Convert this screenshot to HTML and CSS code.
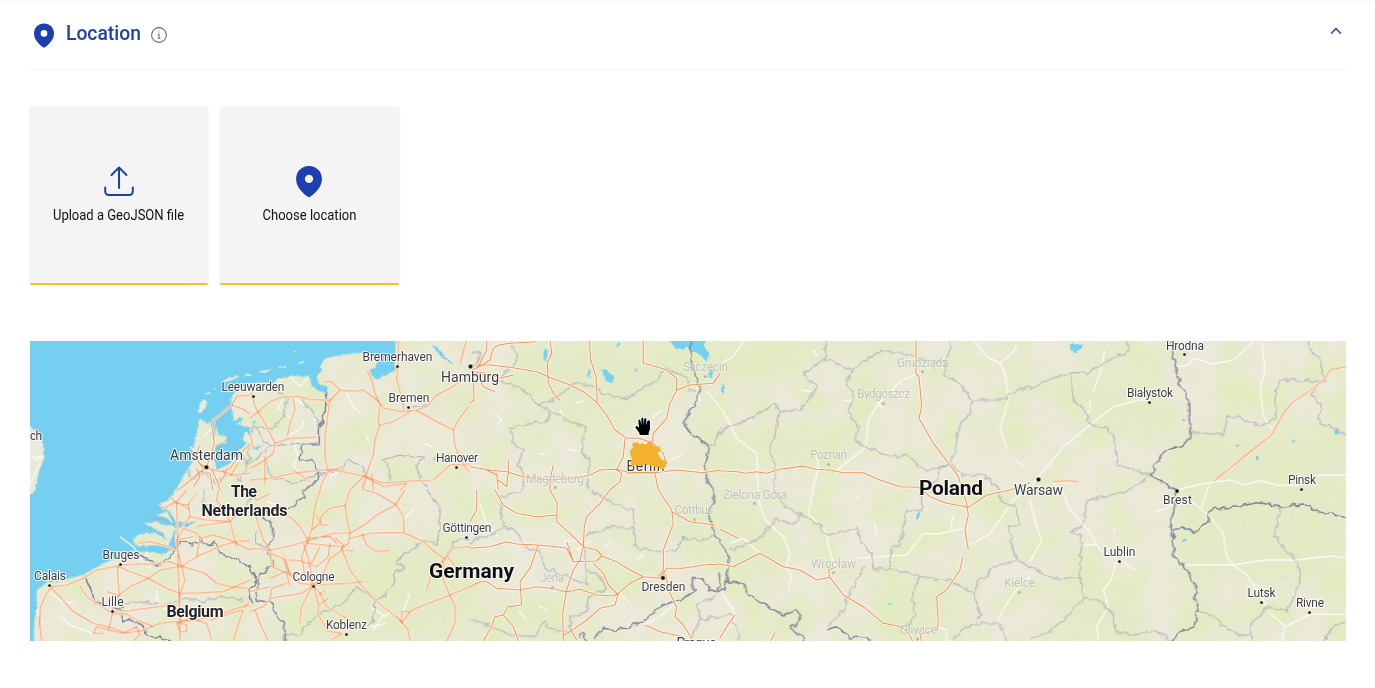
FILE: index.html
```html
<!DOCTYPE html>
<html lang="en">
<head>
<meta charset="utf-8">
<title>Location</title>
<link rel="stylesheet" href="styles.css">
</head>
<body>
<main class="panel">
  <header class="panel-header">
    <svg class="pin" viewBox="0 0 20 24"><path fill-rule="evenodd" d="M10 0C4.200 0 0 4.300 0 10c0 5.400 4 10 8.600 13.500a2.300 2.300 0 0 0 2.800 0C16 20 20 15.400 20 10 20 4.300 15.800 0 10 0zm0 6.600a3.300 3.300 0 1 1 0 6.600 3.300 3.300 0 0 1 0-6.600z"/></svg>
    <h2 class="title">Location</h2>
    <svg class="info" viewBox="0 0 16 16"><circle cx="8" cy="8" r="7.400"/><path d="M6.800 7.200H8v4M6.700 11.300h2.700M8 4.400v1.100"/></svg>
    <svg class="chevron" viewBox="0 0 12 8"><path d="M1.300 6.500 6 1.500l4.700 5"/></svg>
  </header>

  <div class="cards">
    <button class="card card-upload">
      <svg class="upload" viewBox="0 0 30 31"><path d="M15 22V1.500M7.500 9 15 1.500 22.500 9M1.200 21.500v4a3.500 3.500 0 0 0 3.500 3.500h20.600a3.500 3.500 0 0 0 3.500-3.500v-4"/></svg>
      <span class="card-label">Upload a GeoJSON file</span>
    </button>
    <button class="card">
      <svg class="pin pin-large" viewBox="0 0 20 24"><path fill-rule="evenodd" d="M10 0C4.200 0 0 4.300 0 10c0 5.400 4 10 8.600 13.500a2.300 2.300 0 0 0 2.800 0C16 20 20 15.400 20 10 20 4.300 15.800 0 10 0zm0 6.800a3.200 3.200 0 1 1 0 6.400 3.200 3.200 0 0 1 0-6.400z"/></svg>
      <span class="card-label">Choose location</span>
    </button>
  </div>

  <svg class="map" viewBox="0 3 3948 900">
    <defs>
      <filter id="forest" x="0" y="0" width="100%" height="100%" color-interpolation-filters="sRGB">
        <feTurbulence type="fractalNoise" baseFrequency="0.009" numOctaves="4" seed="8"/>
        <feColorMatrix values="0 0 0 0 .885  0 0 0 0 .922  0 0 0 0 .755  3 0 0 0 -1.250"/>
      </filter>
      <filter id="wiggle" filterUnits="userSpaceOnUse" x="0" y="0" width="3948" height="910" color-interpolation-filters="sRGB">
        <feTurbulence type="fractalNoise" baseFrequency="0.055" numOctaves="1" seed="4"/>
        <feDisplacementMap in="SourceGraphic" scale="22" xChannelSelector="R" yChannelSelector="G"/>
      </filter>
      <filter id="ragged" filterUnits="userSpaceOnUse" x="0" y="0" width="3948" height="910" color-interpolation-filters="sRGB">
        <feTurbulence type="fractalNoise" baseFrequency="0.090" numOctaves="2" seed="4"/>
        <feDisplacementMap in="SourceGraphic" scale="9" xChannelSelector="R" yChannelSelector="G"/>
      </filter>
      <filter id="soft"><feGaussianBlur stdDeviation="20"/></filter>

      <g id="roads">
        <g>
          <path d="M660 165 620 170 605 195 552 240 548 268 553 310 540 350 530 380M605 195 635 205 660 222M530 382 508 370 497 350 508 318M530 382 505 400 470 430 440 452M500 385 510 410 490 440M497 350 515 380 545 388 575 395 600 385 625 350 660 310M545 388 560 420 570 450M575 395 610 405 660 400M508 395 540 400 548 450M590 392 570 430M600 410 625 370"/>
        </g>
        <g transform="translate(0 450)">
          <path d="M35 453 30 400 32 350 50 310 65 290 110 285 160 265 200 240 260 228 310 222 360 222 420 215 455 228 500 200 580 165 620 155 660 150M60 290 90 320 130 365 190 400 250 415 290 430 340 420 390 400 440 395 500 390 560 375 620 355 660 345"/>
          <path d="M260 228 300 245 355 265 410 295 450 310 500 310 580 305 660 270M262 228 265 280 268 315 300 290 355 265 390 240 455 228M268 315 250 345 248 365 300 362 400 348 440 345M148 285 170 320 215 350 248 370 290 372 320 390 370 410M230 305 270 318M455 228 465 270 450 310 448 350 455 400 470 405 470 425 450 425 440 400 455 400M455 228 525 250 560 280 600 290 655 295M455 228 445 190 440 150 460 115 500 130 510 145 550 135 600 150 660 180M440 150 490 140M455 112 480 80 475 40 500 10M480 80 530 90 600 95 620 170M480 60 440 35 400 55 388 40M420 20 440 40 475 45M500 110 560 100 600 95 625 70 655 60M440 400 480 385 530 400 545 450M540 390 600 370 640 360 625 400 610 453M640 350 660 335M248 370 235 420 200 410 190 430 220 430M235 420 280 430 320 410 330 435 310 453M325 160 360 155 400 165 440 180M565 0 560 30 580 60 600 95M450 450 440 35 470 0M510 140 500 200"/>
        </g>
        <g transform="translate(660)">
          <path d="M225 125 245 125 270 150 310 153 340 150 375 175 395 195 400 205 455 215 500 210 530 200 560 165 600 145 640 120 655 100M0 235 30 210 60 185 95 172 140 168 180 178 240 182 270 150M240 175 232 240 225 290 225 350 235 395M352 90 365 120 375 160 390 190 385 240 388 260 375 300 370 345 350 400 340 450M445 0 445 60 440 120 455 170 462 210M500 212 560 245 610 270 615 320 640 370M610 270 625 240 655 200M0 420 60 415 130 400 200 392 250 388 300 400 350 410 400 430 460 425 550 420 600 375 660 372M388 255 430 245 480 215M0 140 15 200 40 240 60 280 75 310 70 340 45 360 0 385M75 310 120 295 200 292M112 290 120 250 135 210 130 175M45 350 45 430M130 390 160 410 180 425M235 395 215 430 210 453M235 395 280 380M350 400 300 450M340 408 400 440 470 430 450 453M365 400 370 450M555 0 600 0M0 280 10 325M630 70 650 0M640 375 660 400"/>
        </g>
        <g transform="translate(660 450)">
          <path d="M210 0 195 50 185 120 170 160 155 200 165 260 190 285M300 0 285 45 290 80 300 130 295 160 275 175 300 240 330 280 375 330 400 350 450 390 475 420 480 453M0 175 60 180 130 165 165 155 250 130 300 130 350 100 380 75 435 45 465 0M300 145 360 130 430 128 465 130 520 155 560 190 590 210M345 0 380 10 440 45 460 80 462 130M0 75 60 70 120 80 150 110 170 145 175 160M0 10 20 30 60 10M0 55 15 70 40 150 60 180 65 230 110 250 120 290M160 160 175 205 190 280M170 160 220 165 275 170M170 145 240 140 260 160M115 210 150 212 200 230 235 200 240 160M185 120 210 100 215 75 240 55 290 45M60 190 100 205 115 250 150 280 190 285 215 260 240 205M335 130 350 165 380 185 420 182M275 180 310 182M190 285 250 282 300 280 340 275M190 285 175 310 155 350 148 400M190 285 210 310 230 350 280 380 300 390M190 285 155 310 60 325 40 350 0 365M190 285 205 340 205 375 235 425 275 430 245 450M205 315 225 300M208 345 235 325M60 325 65 295 110 280M60 265 110 245M0 305 60 290M15 360 30 400 55 453M455 365 480 365 510 350 590 320 660 290M455 365 455 400 440 380M455 400 480 365M530 300 545 250 580 210 610 175 660 170M580 210 580 270 600 315 615 350 615 400 590 453M160 255 120 250 105 205M200 75 215 105 235 105M255 145 280 165 270 185 240 205M590 195 620 235 650 245M175 230 190 210 210 170"/>
        </g>
        <g transform="translate(1320)">
          <path d="M0 75 60 75 120 82 200 95 235 110 300 135 340 155 380 188 410 225 435 270 470 295 510 295 550 312 580 340 590 370M240 0 245 40 232 70 235 130 250 160 270 182M358 0 362 60 378 110 382 185M520 0 520 70 560 80 590 90 620 115 620 150 600 190 590 235 550 280 545 320M620 150 660 135 730 130 750 100M0 380 60 390 110 395 160 410 240 420 320 415 360 405 390 390 440 388 470 395 540 400 620 390 700 398 750 390M465 295 460 350 440 390 455 400 450 425 420 450M470 400 560 395 590 370M555 400 565 450M250 375 240 420 240 450M80 400 85 450M115 360 115 395 110 440 85 420M50 0 50 30 25 80 0 95M20 85 60 60 70 25 85 15 120 10 200 5M10 95 50 100 90 115 130 105M0 190 12 180 10 110M30 120 40 140 75 155M50 390 80 405"/>
        </g>
        <g transform="translate(1320 450)">
          <path d="M0 175 60 170 110 155 140 162 200 165 240 168 290 175 310 215 380 213 395 198 440 215 480 240 520 260 570 265 590 235 640 235 700 225 750 222M240 0 262 40 260 95 300 130 340 170 380 180 395 195M75 0 100 45 140 70 200 80 262 75M420 0 390 40 350 80 343 110 340 170 330 210 310 240 290 300 278 370 280 453M205 165 180 235 150 275 155 345 115 350 100 375 75 380 65 410 40 453M0 290 30 275 50 275 80 295 150 300 200 290 240 295 290 305 330 298 380 315 430 318 445 310 480 280 520 260M445 310 435 345 390 355 350 390 300 425 280 435M565 0 605 60 610 100 580 180 580 240 565 260M605 65 660 95 735 105M585 250 600 310 620 350 615 380 640 405 670 453M370 220 400 250 415 285 445 315M290 155 310 215M100 375 130 410 145 453M525 405 570 425 640 440M20 0 20 60 0 95M300 415 320 450"/>
        </g>
        <g transform="translate(2070)">
          <path d="M0 392 50 395 80 400 110 395 140 400 180 388 250 378 285 388 330 390 370 398 430 398 480 420 540 440 595 442 630 470 680 490 745 502 800 465 870 450 930 428M588 0 588 100 597 110 605 200 597 235 640 310 688 372 715 410 740 490 745 525 735 570 745 628M728 652 720 690 680 750 650 770 655 850 650 870 600 882 605 906M0 568 55 595M0 672 40 680 90 655 120 640 190 680 240 690 290 720 330 712 325 690 340 684M330 712 370 765 430 800 490 850 545 860 565 880 580 906M45 825 20 860 0 895M165 878 150 906"/>
        </g>
        <g transform="translate(3000)">
          <path d="M68 425 110 421 145 426M553 422 600 385 660 335 725 285 760 220 785 190 850 145 885 115 900 90 930 83 960 78"/>
        </g>
      </g>
    </defs>

    <rect class="land" width="3948" height="906"/>
    <g class="meadow" filter="url(#soft)">
      <path d="M1700 260 1900 190 2250 120 2450 40 2650 0H2200L1450 0 1430 160zM1880 560 2080 420 2300 600 2250 740 2000 680zM2050 280 2350 230 2550 300 2300 380 2060 390zM3400 280 3948 230V760L3450 690zM3020 120 3420 80 3350 300 3150 280zM1000 620 1250 580 1400 850 1080 900 700 900 800 800zM620 500 700 470 760 560 650 610zM1260 140 1360 120 1350 260 1290 260zM1450 780 1620 760 1650 906H1370zM2500 720 2750 700 2850 880 2570 906zM3060 760 3300 730 3380 906H3100z"/>
    </g>
    <rect width="3948" height="906" filter="url(#forest)"/>

    <g class="water" filter="url(#ragged)">
      <path d="M-20-20H1100L1096 25 1092 90 1070 105 1058 110 1040 118 1024 105 1020 90 1037 80 1042 66 1010 38 970 40 930 45 885 55 872 75 875 90 860 110 865 130 892 140 892 158 870 155 845 135 838 110 790 107 740 118 730 130 700 127 660 130 628 142 612 160 600 175 606 200 612 250 645 258 660 262V285L645 275 638 300 650 310 620 340 580 365 560 388 555 360 552 335 560 315 590 308 590 290 565 285 558 255 548 238 530 250 508 235 500 280 490 325 485 370 460 410 437 450 415 480 388 490 412 515 378 525 405 532 432 555 405 555 380 545 342 550 362 560 400 580 412 600 375 578 325 582 306 605 325 618 380 615 430 625 400 642 350 635 300 635 270 650 220 670 165 702 100 720 50 728 20 750 20 800 12 850 12 930H-20z"/>
      <path d="M545 15 560 20 590 55 615 75 600 70 570 45z" transform="translate(660)"/>
      <path d="M610 245 640 230 635 245 610 255zM560 370 600 355 630 330 600 370 560 390zM540 240 560 250 550 310 545 270zM405 500 440 545 480 548 500 540 475 560 435 565zM435 565 435 630 415 620zM665 250 675 240 675 255zM660 325 700 315 680 328zM1210 355 1216 350 1215 362 1208 362z"/>
      <path d="M222 25 233 30 230 65 220 60zM357 88 363 90 357 115 353 105zM395 88 408 90 432 110 428 130 408 122zM436 18 450 5 452 10 440 22zM492 95 502 82 502 90zM600 0H710L700 15 718 45 710 65 680 35 665 38 650 18 640 30 615 25zM718 85 730 90 725 115 715 110zM634 585 642 592 637 602z" transform="translate(1320)"/>
      <path d="M5 130 15 140 10 165 3 155zM590 520 602 514 595 540 588 538zM504 788 515 792 510 797z" transform="translate(2070)"/>
      <path d="M120 12 160 12 155 25 135 38 122 28zM455 235 468 240 460 245zM612 318 628 313 625 322zM785 298 798 303 790 308zM678 348 687 352 685 360 678 358zM912 267 920 268 928 280 915 285zM457 600 470 595 470 603 458 607zM885 890 895 894 892 900z" transform="translate(3000)"/>
    </g>
    <g class="coast" filter="url(#ragged)">
      <path d="M-10 255 0 258 20 275 40 315 42 355 25 400 17 450 5 462-10 464zM505 215 510 190 522 178 532 185 525 205 512 220zM527 163 540 152 540 158 530 165zM550 147 556 143 554 150zM575 125 600 112 630 107 610 119 580 128zM642 104 665 101 664 108 642 109zM690 93 725 88 710 96 690 98zM742 83 770 78 765 84 742 87zM810 66 822 64 820 70 805 72zM795 32 806 38 798 38z"/>
    </g>

    <g class="minor-roads">
      <path d="M500 340 480 320M520 290 545 265M15 350H42M0 345 20 360 40 345M30 370 10 410 0 435M20 810 40 850M130 790 90 780 50 750M90 830 130 860 190 880M380 750 385 790 430 830M270 590 310 620 340 665M370 770 410 810M520 560 600 520M350 635 360 690"/>
      <path d="M100 172 85 205 130 240M135 175 180 210 205 260M110 290 155 265 160 240M290 160 310 200 330 220M120 110 150 140 175 110M130 310 145 350 130 375 150 410M240 410 265 395M525 310 550 322M350 285 355 305" transform="translate(660)"/>
      <path d="M460 90 490 60M360 350 400 375 370 420M360 410 410 400M480 310 460 365M400 380 420 370M50 35 120 60" transform="translate(660 450)"/>
      <path d="M80 225 95 240 82 250M270 210 290 245M315 190 345 182M210 340 225 345M680 140 690 185M710 155 750 200M600 360 640 345M550 230 575 210M290 325 320 335" transform="translate(1320)"/>
      <path d="M30 40 50 100 85 140M280 155 325 150 340 165M320 180 360 155M500 210 520 190M525 405 570 380 610 345M205 345 230 360M400 170 420 158M610 180 640 160M450 310 475 335M145 360 170 390" transform="translate(1320 450)"/>
      <path d="M0 200 35 260 50 295 110 340 115 480 135 540 190 590 210 640 200 675 215 710 205 745M0 70 40 50 70 5M30 610 70 595 120 640M585 105 540 125 475 190 445 240 438 320 345 395M290 345 295 385 280 440 265 520 320 580 325 620 345 680M410 655 480 650 560 645 610 580 650 582 735 565M690 570 700 525M750 615 810 580 860 510 880 480 930 440M765 5 800 50 840 70 855 100 865 180 840 270 862 325M840 70 880 35 890 15M470 190 490 205M465 550 468 585M405 465 415 480M885 360 915 378M832 840 880 760 930 710M5 760 40 810 45 860 60 885M650 860 680 870 680 906M370 182H395M245 150 275 155M280 30 295 50" transform="translate(2070)"/>
      <path d="M0 445 20 415 60 370 100 320 180 255 250 200 325 180 360 180M180 180 180 210 165 230M190 155 210 100 225 30M440 80 475 75 490 55 550 72 610 60 670 5M695 5 705 90 690 145 700 225 725 270M440 450 500 435 540 428 600 420 640 435 690 422 740 435 800 437 870 405 960 405M540 428 515 500M480 480 540 530 580 580 590 650 610 675 650 705 700 780 720 820 765 860 755 906M765 860 840 823 960 823M470 675 610 675 700 660 800 660 900 648 960 655M70 430 100 460 120 510 175 570 210 630M160 615 200 615M210 630 260 655 245 715 220 750 235 800 200 860 205 900M270 660 315 690M250 560 255 580M0 480 20 560 35 600 0 665M375 515 410 505 430 490" transform="translate(3000)"/>
    </g>

    <g class="regions" filter="url(#wiggle)">
      <path d="M550 345 590 300 620 330 655 370 655 310M470 390 490 420 525 395 555 430 600 400 630 420 660 350M520 450 520 490 540 505 580 500 640 505 680 450M270 790 340 785 400 795 470 775 520 785 570 770 640 780M360 535 400 535 430 555 490 550"/>
      <path d="M65 140 110 175 100 230 65 270 15 260 0 285M20 265 40 300 60 320 0 370M60 320 150 310M45 350 60 410 140 430 205 400M205 400 270 395 295 360 340 380 345 410 335 450M525 350 500 380 510 415 530 440M397 360 450 345 490 355 525 350M397 360 420 390 420 430 470 425M150 170 190 220 210 260M430 90 450 80M490 200 530 195" transform="translate(660)"/>
      <path d="M20 120 20 160 60 180M100 440 150 430 200 375 280 340 320 290 350 310 375 330 370 390 350 410M375 330 410 310 435 280 430 250 465 235 440 215 465 190 520 155 560 165 570 110 570 50 530 0M590 195 620 145 660 150" transform="translate(660 450)"/>
      <path d="M0 40 30 35 20 75 0 80M120 0 145 50 130 80 98 100 95 125 160 150 205 195 250 180 315 130 370 135 400 160 460 178 520 145 560 120 590 85 655 115 655 150 680 150M205 195 240 210 235 240 120 265 130 310 160 330 145 370 160 400 160 450M240 210 290 240 345 260 335 340 360 355 350 450M750 275 735 310 710 320"  transform="translate(1320)"/>
      <path d="M155 5 90 20 100 110 75 130 40 140 0 160M100 110 140 125 160 165 210 185 225 235 290 260 350 285 345 240 340 140 420 110 490 115 490 60 430 40 360 0M490 115 500 175 580 185 620 180 635 145 700 150 735 135M350 240 380 250 410 295 355 320 350 365 300 380 300 425 250 420 220 395 195 440 120 435 70 410 0 390M735 320 680 345 690 390 660 453M690 390 750 380" transform="translate(1320 450)"/>
      <path d="M320 0 315 55 250 100 290 140 265 180 235 210 175 215 165 190 105 225 50 255 0 265M315 55 395 92 378 125 400 170 385 220 415 260 405 300 440 320 510 350 560 345 610 390 650 385 688 372 705 330 720 250 750 225 755 180 720 130 675 110 680 50 695 5M395 92 430 65 490 30 540 40 585 45 605 60 680 65M760 180 850 180 890 150 930 140M175 215 165 290 150 320 165 390 160 450 200 500 240 525 220 555 170 535 120 595 80 610 30 630M240 525 280 540 325 585 380 570 415 570 425 610 455 640 460 690 510 685 510 640 545 600 555 515 605 510 605 460 650 420 660 385 690 375 725 405 790 405 835 445 840 485 885 500 900 550 865 560 885 650 930 685M510 685 600 710 690 720 760 760 780 715 800 715 810 680 890 665M430 685 390 760 370 810 320 865M600 710 575 760 585 820 555 870M760 760 780 820 770 850 840 850 860 906M770 850 720 870 700 906M0 825 35 825 60 900M0 280 20 255" transform="translate(2070)"/>
      <path d="M0 145 50 120 120 98 170 100 235 60 290 35 295 5M120 98 130 180 160 205 185 255 225 265 250 285 265 375 360 405 300 450 240 465 175 480 155 560 125 575 155 590 150 715 70 715 0 680M480 275 580 285 595 225 650 240 690 260 735 235 735 160 750 120 885 125 870 60 840 30 835 0M860 135 845 165 875 195 865 250 900 260 960 290M750 500 735 590 805 670 810 720 795 760 770 815 710 800 690 830 665 850 665 906M505 810 555 830 580 860 630 885 665 885M150 715 160 775 205 780 250 820 255 870 300 885 385 875 420 900M160 775 100 840 60 875 0 895M960 835 910 860 880 900" transform="translate(3000)"/>
    </g>
    <g class="countries" filter="url(#wiggle)">
      <path d="M165 705 180 740 195 785 240 800 275 805 280 840 310 840 340 860 350 885 420 903M290 640 350 655 380 675 420 655 435 625 455 605 490 615 515 600 540 620 558 605 570 640 610 655 660 680 680 720 660 750 665 790"/>
      <path d="M230 155 225 220 208 265 208 310 155 315 150 355 190 365 205 395 200 425 160 450" transform="translate(660)"/>
      <path d="M155 0 165 20 125 50 65 60 30 70 65 100 70 150 50 170 70 230 25 255 20 330 70 340 80 380 105 405 105 453" transform="translate(660 450)"/>
      <path d="M660 0 665 70 688 150 675 200 650 225 642 260 680 290 718 325 705 365 710 410 728 450 735 485 715 520 735 590 750 600 778 655 765 750 745 750 750 700 M370 900 400 865 440 870 480 860 530 835 580 795 630 780 680 750 665 740 670 715 700 720 720 750 745 755M325 890 340 880 350 906M770 725 820 730 840 770 940 825 975 810 995 830 960 865 1000 890 1000 906M1070 870 1100 860 1140 890 1200 895 1200 906" transform="translate(1320)"/>
      <path d="M425 0 430 50 445 120 475 180 480 290 460 315 400 335 362 405 395 425 440 453 430 520 420 560 435 650 470 690 505 760 490 770 505 810 490 865 450 875 425 906M430 600 430 570 460 560 490 580 535 545 540 510 620 500 680 488 760 498 820 492 870 520 910 520 960 543" transform="translate(3000)"/>
    </g>

    <use href="#roads" class="road-casing"/>
    <use href="#roads" class="road"/>

    <g transform="scale(3) translate(-30 -340)">
      <g class="dots">
        <circle cx="206.500" cy="467.300" r="2.200"/><circle cx="470.500" cy="366.500" r="2.200"/><circle cx="663" cy="578" r="2.200"/><circle cx="1038.500" cy="479.500" r="2.300"/><circle cx="1177" cy="491" r="2.100"/>
        <circle cx="253.500" cy="396.500" r="1.600"/><circle cx="397.500" cy="366.500" r="1.600"/><circle cx="408.500" cy="407.500" r="1.600"/><circle cx="456.500" cy="467.500" r="1.600"/><circle cx="466.500" cy="537.500" r="1.600"/><circle cx="313.500" cy="586.500" r="1.600"/><circle cx="346.500" cy="634.500" r="1.600"/><circle cx="120.500" cy="564.500" r="1.600"/><circle cx="49.500" cy="585.500" r="1.600"/><circle cx="112.500" cy="611.500" r="1.600"/><circle cx="1184.500" cy="354.500" r="1.600"/><circle cx="1149.500" cy="402.500" r="1.600"/><circle cx="1301.500" cy="489.500" r="1.600"/><circle cx="1119.500" cy="561.500" r="1.600"/><circle cx="1261.500" cy="602.500" r="1.600"/><circle cx="1309.500" cy="612.500" r="1.600"/>
      </g>
      <g class="dots faint">
        <circle cx="705.500" cy="376.500" r="1.600"/><circle cx="555.500" cy="487.500" r="1.600"/><circle cx="552.500" cy="587.500" r="1.600"/><circle cx="694.500" cy="519.500" r="1.600"/><circle cx="922.500" cy="371.500" r="1.600"/><circle cx="883.500" cy="403.500" r="1.600"/><circle cx="828.500" cy="464.500" r="1.600"/><circle cx="754.500" cy="503.500" r="1.600"/><circle cx="833.500" cy="572.500" r="1.600"/><circle cx="1019.500" cy="592.500" r="1.600"/><circle cx="917.500" cy="639" r="1.600"/>
      </g>
      <g class="label faint">
        <text x="683" y="371" textLength="45">Szczecin</text>
        <text x="526" y="482.500" textLength="58">Magdeburg</text>
        <text x="540" y="582" textLength="24">Jena</text>
        <text x="674.500" y="514" textLength="39">Cottbus</text>
        <text x="897" y="366.500" textLength="51">Grudziądz</text>
        <text x="857" y="398" textLength="53">Bydgoszcz</text>
        <text x="810" y="459" textLength="37">Poznań</text>
        <text x="723" y="498.500" textLength="64">Zielona Góra</text>
        <text x="811" y="567.500" textLength="45">Wrocław</text>
        <text x="1004" y="587" textLength="31">Kielce</text>
        <text x="900" y="634" textLength="37">Gliwice</text>
      </g>
      <g class="label">
        <text x="30" y="440" textLength="12">ch</text>
        <text x="221.500" y="391" textLength="63">Leeuwarden</text>
        <text x="362.500" y="361" textLength="70">Bremerhaven</text>
        <text x="388.500" y="402" textLength="41">Bremen</text>
        <text x="436" y="462" textLength="42">Hanover</text>
        <text x="442.500" y="532" textLength="49">Göttingen</text>
        <text x="292.500" y="581" textLength="42">Cologne</text>
        <text x="326" y="629" textLength="41">Koblenz</text>
        <text x="102.500" y="559" textLength="37">Bruges</text>
        <text x="34" y="580" textLength="32">Calais</text>
        <text x="101.500" y="606" textLength="22">Lille</text>
        <text x="641.500" y="590.500" textLength="44">Dresden</text>
        <text x="1166" y="349.500" textLength="38">Hrodna</text>
        <text x="1127" y="397" textLength="46">Białystok</text>
        <text x="1103.500" y="556" textLength="32">Lublin</text>
        <text x="1163" y="503.500" textLength="29">Brest</text>
        <text x="1288" y="484" textLength="28">Pinsk</text>
        <text x="1247.500" y="597" textLength="28">Lutsk</text>
        <text x="1296" y="607" textLength="28">Rivne</text>
      </g>
      <g class="label city">
        <text x="170" y="460" textLength="73">Amsterdam</text>
        <text x="441" y="382" textLength="58">Hamburg</text>
        <text x="626.500" y="471" textLength="38">Berlin</text>
        <text x="1014" y="495" textLength="49">Warsaw</text>
        <text x="676.500" y="648" textLength="40">Prague</text>
      </g>
      <g class="label country">
        <text x="231" y="497" textLength="26">The</text>
        <text x="201.500" y="516" textLength="86">Netherlands</text>
        <text x="166.500" y="616.500" textLength="57">Belgium</text>
      </g>
      <g class="label country large">
        <text x="429" y="577.500" textLength="85">Germany</text>
        <text x="919" y="495" textLength="64">Poland</text>
      </g>
      <g transform="translate(600 400) scale(.33333)">
        <path class="berlin" d="M92 150 100 145 98 130 112 128 120 135 125 130 135 135 145 128 150 122 155 135 160 140 178 140 180 150 172 160 178 170 185 180 196 182 196 200 188 208 175 200 165 202 160 197 150 195 135 191 120 195 105 195 95 200 92 185 97 175 92 165z"/>
        <path class="hand" d="M119 105 118 98 107 84Q105 77 111 78L117 83 115 62Q118 56 121 61L124 76V56Q127 50 130 55L131 75 133 56Q137 51 139 57V76L142 64Q146 58 150 64V88L146 98V105z"/>
      </g>
    </g>
  </svg>
</main>
</body>
</html>
```
FILE: styles.css
```css
* { box-sizing: border-box; }

body {
  margin: 0;
  background: #fff;
  color: #111;
  font-family: Roboto, "Liberation Sans", sans-serif;
}

.panel {
  height: 688px;
  padding: 0 29px 0 30px;
  border-top: 1px solid #f9f9f9;
  overflow: hidden;
}

.panel-header {
  display: flex;
  align-items: flex-start;
  height: 69px;
  padding: 22px 4px 0;
  border-bottom: 1px solid #f7f7f7;
}

.pin { width: 20px; height: 25px; fill: #1e40af; flex: none; }

.title {
  margin: -2px 0 0 11.500px;
  width: 75.500px;
  font-size: 20px;
  line-height: 24px;
  font-weight: 500;
  color: #1e40af;
  white-space: nowrap;
  transform: scaleX(0.965);
  transform-origin: left;
}

.info {
  width: 16px;
  height: 16px;
  margin: 4px 0 0 10px;
  fill: none;
  stroke: #6b6b6b;
  stroke-width: 1.100;
}

.chevron {
  width: 12px;
  height: 8px;
  margin: 4px 0 0 auto;
  fill: none;
  stroke: #1e40af;
  stroke-width: 1.500;
}

.cards { display: flex; gap: 12px; margin-top: 37px; }

.card {
  display: flex;
  flex-direction: column;
  align-items: center;
  width: 179px;
  height: 178px;
  padding: 59px 0 0;
  border: 0;
  border-bottom: 2px solid #fbbf24;
  border-radius: 2px;
  background: #f4f4f4;
  box-shadow: 0 0 2px rgba(0, 0, 0, 0.120);
  font-family: inherit;
  color: #111;
}

.card-upload { width: 178px; }
.card + .card { padding-right: 1px; }

.upload {
  width: 30px;
  height: 31px;
  fill: none;
  stroke: #1e40af;
  stroke-width: 2;
  stroke-linecap: round;
  stroke-linejoin: round;
}

.pin-large { width: 26px; height: 31px; }

.card-label {
  margin-top: 10px;
  font-size: 14px;
  line-height: 16px;
  white-space: nowrap;
  transform: scaleX(0.930);
}

.map { display: block; width: 1316px; height: 300px; margin-top: 56px; overflow: hidden; }

.land { fill: #ebe9d8; }
.meadow { fill: #e3eac5; opacity: 0.800; }
.water { fill: #75cff0; }
.coast { fill: #ebe9d8; }

.minor-roads, .regions, .countries { fill: none; stroke-linejoin: round; }
.minor-roads { stroke: #fbfaf5; stroke-width: 4; }
.regions { stroke: #aeaeb9; stroke-width: 3.200; }
.countries { stroke: #85859a; stroke-width: 4.500; }

.road-casing, .road { fill: none; stroke-linejoin: round; }
.road-casing { stroke: #fffaf0; stroke-width: 7.500; }
.road { stroke: #f5935a; stroke-width: 3.200; }

.dots { fill: #111; stroke: #fff; stroke-width: 0.400; }
.dots.faint { fill: #b9b9ad; stroke: none; }

.label {
  font-family: Roboto, "Liberation Sans", sans-serif;
  font-size: 12px;
  fill: #3c3c43;
  stroke: rgba(255, 255, 255, 0.850);
  stroke-width: 2px;
  stroke-linejoin: round;
  paint-order: stroke;
}
.label.faint { fill: #c3c3b9; stroke: rgba(255, 255, 255, 0.300); }
.label.city { font-size: 14px; }
.label.country { font-size: 16px; font-weight: 700; fill: #222226; }
.label.large { font-size: 21px; fill: #111; }

.berlin { fill: #f4b12b; stroke: #f4b12b; stroke-width: 2; stroke-linejoin: round; }
.hand { fill: #000; stroke: #fff; stroke-width: 4; paint-order: stroke; }
```
